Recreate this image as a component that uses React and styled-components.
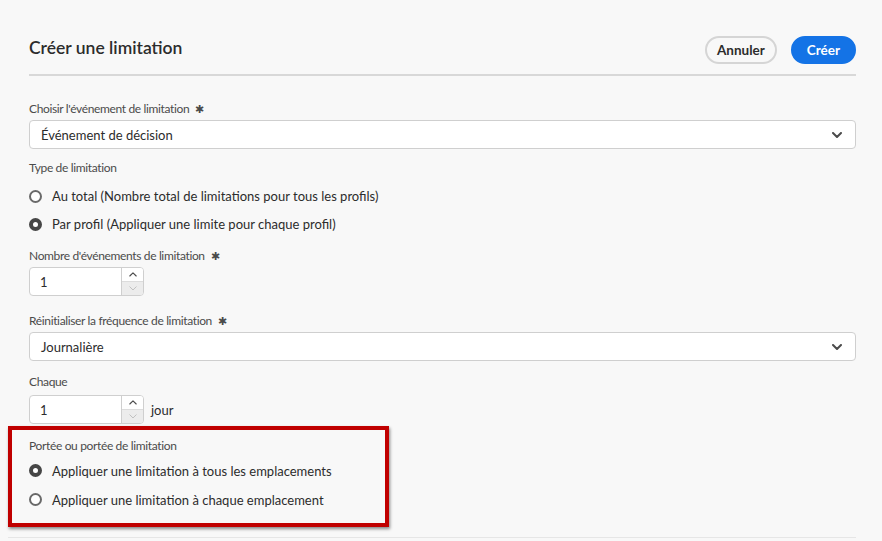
import React from "react";
import styled, { createGlobalStyle } from "styled-components";

const Global = createGlobalStyle`
  html, body {
    margin: 0;
    padding: 0;
    background: #f8f8f8;
  }
  body {
    font-family: "Lato", "Noto Sans", sans-serif;
    color: #2c2c2c;
  }
`;

const Page = styled.div`
  width: 882px;
  height: 541px;
  box-sizing: border-box;
  padding: 36px 26px 0 29px;
  overflow: hidden;
  background: #f8f8f8;
`;

const Header = styled.div`
  display: flex;
  align-items: center;
  justify-content: space-between;
  height: 28px;
  padding-bottom: 10px;
  border-bottom: 2px solid #d8d8d8;
`;

const Title = styled.h1`
  margin: 0;
  font-size: 17.5px;
  font-weight: 600;
  color: #2c2c2c;
  position: relative;
  top: -3px;
`;

const Actions = styled.div`
  display: flex;
  gap: 14px;
`;

const Button = styled.button`
  height: 28px;
  box-sizing: border-box;
  padding: 0 ${(p) => (p.$primary ? "14px" : "10px")};
  border-radius: 14px;
  font-family: inherit;
  font-size: 13.5px;
  font-weight: 700;
  cursor: pointer;
  border: 2px solid ${(p) => (p.$primary ? "#1473e6" : "#d5d5d5")};
  background: ${(p) => (p.$primary ? "#1473e6" : "transparent")};
  color: ${(p) => (p.$primary ? "#ffffff" : "#2c2c2c")};
`;

const Field = styled.div`
  margin-top: ${(p) => p.$top}px;
`;

const Label = styled.div`
  font-size: 12px;
  line-height: 16px;
  letter-spacing: -0.35px;
  color: #4b4b4b;
  margin-bottom: ${(p) => (p.$gap !== undefined ? p.$gap : 3)}px;
`;

const Star = styled.span`
  margin-left: 6px;
  font-size: 11px;
`;

const Select = styled.div`
  height: 29px;
  box-sizing: border-box;
  border: 1px solid #cfcfcf;
  border-radius: 4px;
  background: #fff;
  display: flex;
  align-items: center;
  justify-content: space-between;
  padding: 0 13px 0 11px;
  font-size: 13px;
  color: #2c2c2c;
`;

const RadioRow = styled.label`
  display: flex;
  align-items: center;
  height: ${(p) => p.$h || 28}px;
  font-size: 13px;
  color: #2c2c2c;
  gap: 10px;
`;

const RadioDot = styled.span`
  width: 13px;
  height: 13px;
  box-sizing: border-box;
  border-radius: 50%;
  background: #fff;
  border: ${(p) => (p.$checked ? "4.5px solid #464646" : "2px solid #6a6a6a")};
  flex-shrink: 0;
`;

const NumberRow = styled.div`
  display: flex;
  align-items: center;
  gap: 7px;
  font-size: 13px;
`;

const NumberBox = styled.div`
  display: flex;
  width: 115px;
  height: 29px;
  box-sizing: border-box;
  border: 1px solid #cfcfcf;
  border-radius: 4px;
  background: #fff;
  overflow: hidden;
`;

const NumberValue = styled.div`
  flex: 1;
  display: flex;
  align-items: center;
  padding-left: 10px;
  font-size: 13px;
`;

const Steppers = styled.div`
  width: 21px;
  border-left: 1px solid #cfcfcf;
  display: flex;
  flex-direction: column;
`;

const Step = styled.div`
  flex: 1;
  display: flex;
  align-items: center;
  justify-content: center;
  background: ${(p) => (p.$disabled ? "#ececec" : "#fff")};
  border-top: ${(p) => (p.$disabled ? "1px solid #dcdcdc" : "none")};
`;

const Scope = styled.section`
  margin: 2px 0 0 -21px;
  width: 381px;
  height: 101px;
  box-sizing: border-box;
  border: 4px solid #c00000;
  box-shadow: 1px 2px 3px rgba(0, 0, 0, 0.45);
  padding: 8px 0 0 17px;
`;

const BottomRule = styled.div`
  margin-top: 10px;
  margin-left: -21px;
  height: 1px;
  background: #e6e6e6;
`;

const Chevron = ({ up, color = "#4b4b4b", size = 10, w = 2 }) => (
  <svg width={size} height={size * 0.6} viewBox="0 0 10 6" fill="none">
    <path
      d={up ? "M1 5 L5 1 L9 5" : "M1 1 L5 5 L9 1"}
      stroke={color}
      strokeWidth={w}
      strokeLinecap="round"
      strokeLinejoin="round"
    />
  </svg>
);

const Radio = ({ checked, children, h }) => (
  <RadioRow $h={h}>
    <RadioDot $checked={checked} />
    {children}
  </RadioRow>
);

const NumberField = ({ value }) => (
  <NumberBox>
    <NumberValue>{value}</NumberValue>
    <Steppers>
      <Step>
        <Chevron up size={8} w={1.4} color="#4b4b4b" />
      </Step>
      <Step $disabled>
        <Chevron size={8} w={1} color="#b5b5b5" />
      </Step>
    </Steppers>
  </NumberBox>
);

export default function App() {
  return (
    <>
      <Global />
      <Page>
        <Header>
          <Title>Créer une limitation</Title>
          <Actions>
            <Button>Annuler</Button>
            <Button $primary>Créer</Button>
          </Actions>
        </Header>

        <Field $top={25}>
          <Label>
            Choisir l'événement de limitation<Star>✱</Star>
          </Label>
          <Select>
            Événement de décision
            <Chevron />
          </Select>
        </Field>

        <Field $top={11}>
          <Label $gap={6}>Type de limitation</Label>
          <Radio>Au total (Nombre total de limitations pour tous les profils)</Radio>
          <Radio checked>Par profil (Appliquer une limite pour chaque profil)</Radio>
        </Field>

        <Field $top={10}>
          <Label>
            Nombre d'événements de limitation<Star>✱</Star>
          </Label>
          <NumberField value="1" />
        </Field>

        <Field $top={17}>
          <Label>
            Réinitialiser la fréquence de limitation<Star>✱</Star>
          </Label>
          <Select>
            Journalière
            <Chevron />
          </Select>
        </Field>

        <Field $top={13}>
          <Label $gap={5}>Chaque</Label>
          <NumberRow>
            <NumberField value="1" />
            jour
          </NumberRow>
        </Field>

        <Scope>
          <Label $gap={2}>Portée ou portée de limitation</Label>
          <Radio checked h={29}>Appliquer une limitation à tous les emplacements</Radio>
          <Radio h={29}>Appliquer une limitation à chaque emplacement</Radio>
        </Scope>
        <BottomRule />
      </Page>
    </>
  );
}
